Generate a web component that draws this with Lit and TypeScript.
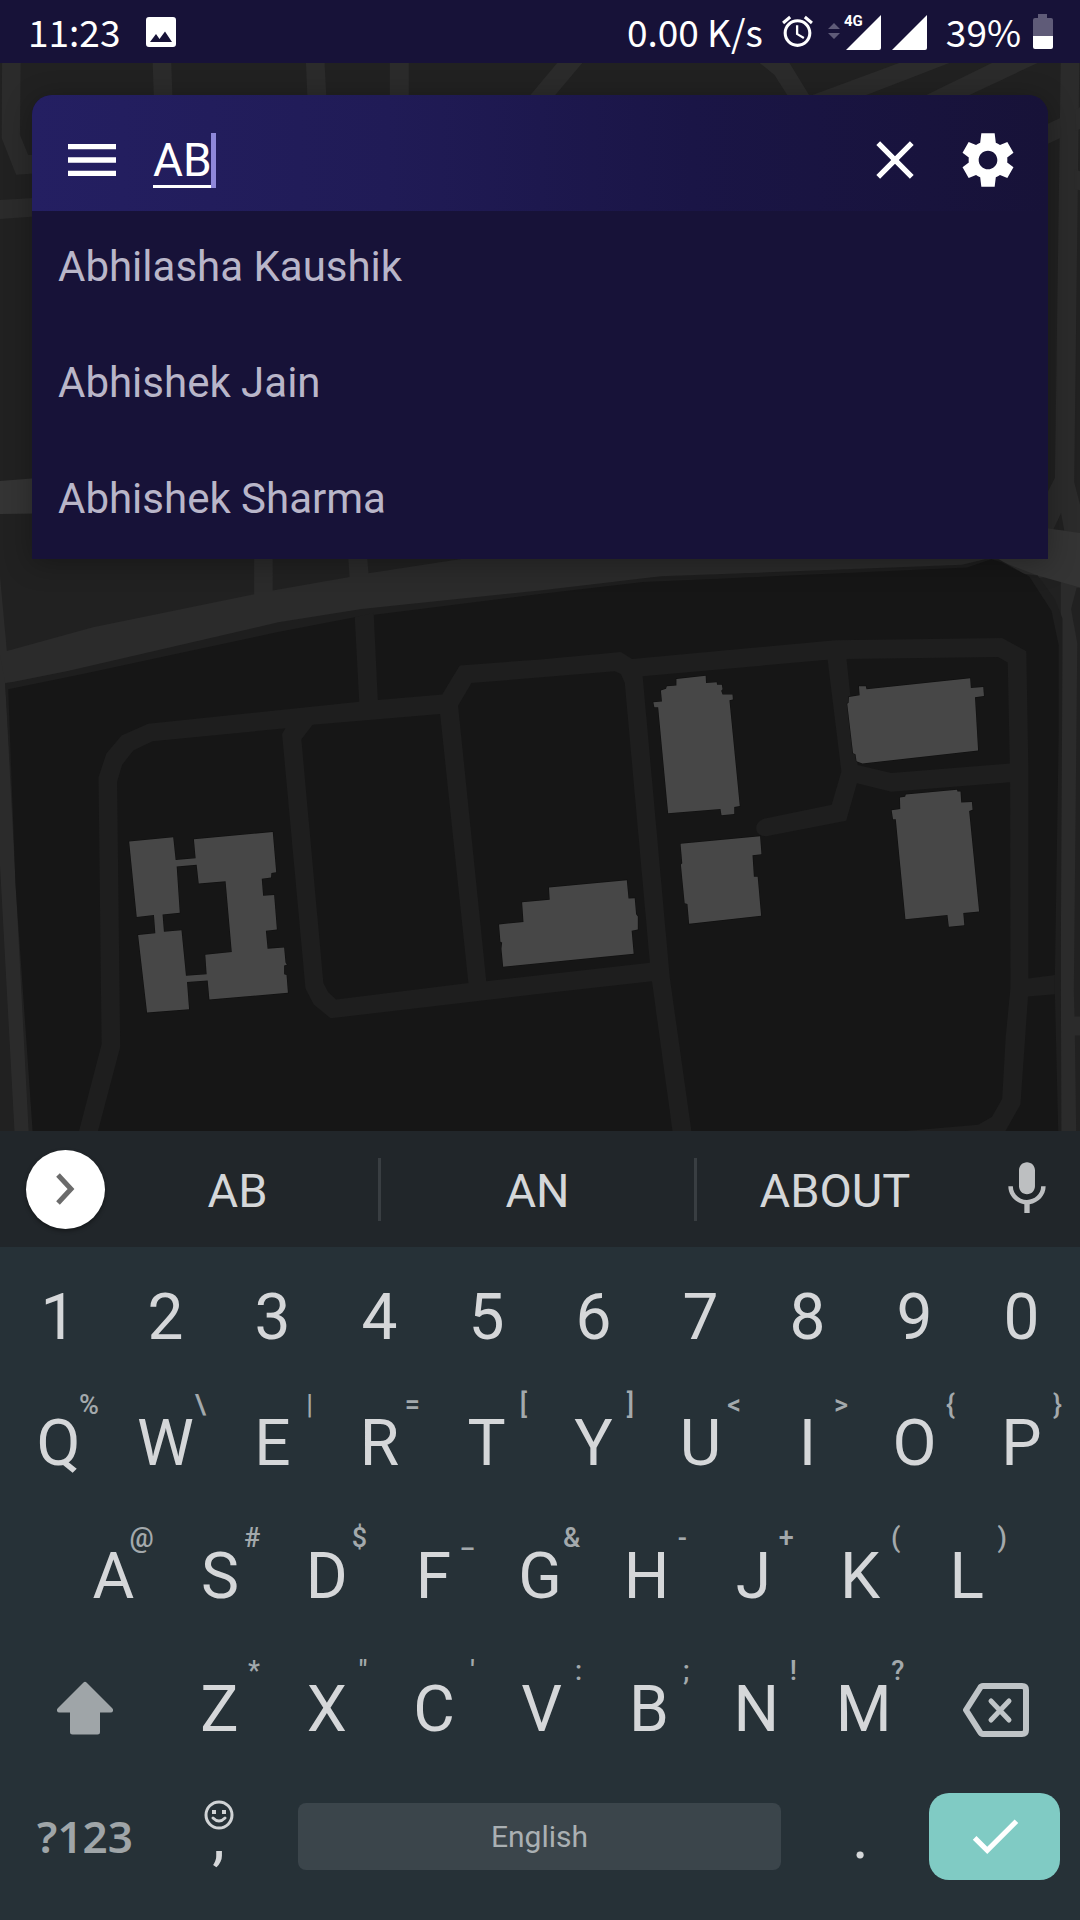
import { LitElement, html, css, svg, nothing } from "lit";
import { customElement, property, state } from "lit/decorators.js";

type Key = [label: string, hint?: string];

const DIGITS: Key[] = [..."1234567890"].map((d) => [d] as Key);
const TOP: Key[] = [
  ["Q", "%"], ["W", "\\"], ["E", "|"], ["R", "="], ["T", "["],
  ["Y", "]"], ["U", "<"], ["I", ">"], ["O", "{"], ["P", "}"],
];
const HOME: Key[] = [
  ["A", "@"], ["S", "#"], ["D", "$"], ["F", "_"], ["G", "&"],
  ["H", "-"], ["J", "+"], ["K", "("], ["L", ")"],
];
const LOWER: Key[] = [
  ["Z", "*"], ["X", '"'], ["C", "'"], ["V", ":"], ["B", ";"], ["N", "!"], ["M", "?"],
];

/* Status bar: clock, traffic, signal and battery. */
@customElement("status-bar")
export class StatusBar extends LitElement {
  static styles = css`
    :host {
      display: flex;
      align-items: center;
      height: 63px;
      padding: 0 27px 0 28px;
      background: #171238;
      color: #fff;
      font: 400 37px/63px "Noto Sans CJK SC", "Noto Sans", sans-serif;
      white-space: nowrap;
    }
    svg { display: block; flex: none; }
    .picture { margin-left: 26px; }
    .traffic { margin-left: auto; }
    .alarm { margin-left: 16px; }
    .signal { margin-left: 12px; }
    .level { margin-left: 18px; }
    .battery { margin-left: 12px; }
    .net { font: 700 15px Roboto, sans-serif; }
  `;

  render() {
    return html`
      <span>11:23</span>
      <svg class="picture" width="30" height="30" viewBox="0 0 30 30" aria-hidden="true">
        <path fill="#fff" fill-rule="evenodd" d="M3 0h24a3 3 0 0 1 3 3v24a3 3 0 0 1-3 3H3a3 3 0 0 1-3-3V3a3 3 0 0 1 3-3zM4 25h22l-7-10.500-5.500 7.500L10 17z" />
      </svg>
      <span class="traffic">0.00 K/s</span>
      <svg class="alarm" width="37" height="37" viewBox="0 0 24 24" fill="#fff" aria-hidden="true">
        <path d="M22 5.720l-4.600-3.860-1.290 1.530 4.600 3.860L22 5.720zM7.880 3.390L6.600 1.860 2 5.710l1.290 1.530 4.590-3.850zM12.500 8H11v6l4.750 2.850.75-1.230-4-2.370V8zM12 4c-4.970 0-9 4.030-9 9s4.020 9 9 9c4.970 0 9-4.030 9-9s-4.030-9-9-9zm0 16c-3.870 0-7-3.130-7-7s3.130-7 7-7 7 3.130 7 7-3.130 7-7 7z" />
      </svg>
      <svg class="signal" width="100" height="48" viewBox="0 -6 100 48" fill="#fff" aria-hidden="true">
        <path fill="#5f5b78" d="M0 15l6-6 6 6zM0 19h12l-6 6z" />
        <path d="M53 1v33a2 2 0 0 1-2 2H18zM99 1v33a2 2 0 0 1-2 2H64z" />
        <text class="net" x="16" y="12">4G</text>
      </svg>
      <span class="level">39%</span>
      <svg class="battery" width="20" height="35" viewBox="0 0 20 35" aria-hidden="true">
        <path fill="#5f5b78" d="M5 0h9v4h4a2 2 0 0 1 2 2v17H0V6a2 2 0 0 1 2-2h3z" />
        <path fill="#fff" d="M0 22h20v11a2 2 0 0 1-2 2H2a2 2 0 0 1-2-2z" />
      </svg>
    `;
  }
}

/* Dark street map; scales to cover whatever area it is given. */
@customElement("street-map")
export class StreetMap extends LitElement {
  static styles = css`
    :host { display: block; overflow: hidden; background: #212121; }
    svg { display: block; width: 100%; height: 100%; }
    .land { fill: #212121; }
    .road { fill: #2b2b2b; }
    .wide { fill: #343434; }
    .campus { fill: #161616; }
    .lane { fill: #1e1e1e; }
    .building { fill: #474747; stroke: #101010; stroke-width: 3; paint-order: stroke; fill-rule: evenodd; }
  `;

  private streets = svg`
    <g class="road" transform="scale(.3444 .3333)">
      <path d="M6 180H60L58 405 82 465H110V520L47 524 5 415z" />
      <path d="M0 600L110 593V649L0 657z" />
      <path d="M443 180H497L501 300H447zM888 180H942L948 300H893zM1132 180H1187V300H1132z" />
      <path d="M1625 180H1698L1600 300H1528zM2195 180H2287L2358 300H2295L2249 225z" />
      <path d="M2320 300L2634 180H2779L2478 300zM2660 300L2898 180H3031L2784 300z" />
      <path d="M3080 180H3134L3119 1446 3140 1530V1610H3030V1500L3063 1434z" />
      <path d="M3030 377L3080 353V413L3030 437zM3124 327L3140 320V385L3124 392zM3120 508L3140 515V572L3120 566z" />
      <path class="wide" d="M0 1443L110 1434V1541L0 1542z" />
      <path class="land" d="M3081 1539L3090 1592H3057z" />
    </g>`;

  private campus = svg`
    <g transform="translate(0 540) scale(.3444 .38265)">
      <path class="road" d="M0 95L20 290 270 228 738 142V0H792V132L1015 97 1008 0H1062L1070 87 1700 0H3030L3136 100V125L3126 125 3110 180 3128 270 3118 1180 3120 1245H3136V1295H3121L3125 1560H3080V93L0 375z" />
      <path class="wide" d="M2860 40L3030 -32 3140 -18V125L3013 93z" />
      <path class="road" d="M0 300L15 375 84 1560H43L0 850z" />
      <path class="lane" d="M15 375L200 342 808 215 1050 180 1568 132 1918 95 2793 65 2860 50H2900L2973 88 3013 93 3063 155 3085 205V300L3080 1100 3082 1560H96z" />
      <path class="campus" d="M24 390L240 350 800 242 1030 202 1568 141 1868 110 2808 72 2878 50 2908 58 2988 95 3053 185 3074 275V500L3063 1136V1187L3073 1560H96L45 900z" />
      <path class="lane" d="M225 1560L295 1318 286 620 309 558 353 511 430 480 1043 423 1030 202 1085 190 1097 418 1284 404 1335 328 1568 312 1803 293 1835 311 2425 262 2910 256 2980 291 2986 600V1146L3063 1137V1187L2985 1193 2963 1475 2910 1560H2430L2840 1528 2880 1508 2910 1460 2920 1300 2934 1170 2933 633 2588 658 2488 636 2457 734 2225 774C2186 774 2186 734 2225 727L2415 692 2443 605 2403 313 1866 356 1945 1145 2010 1560H1955L1893 1153 1568 1186 960 1250 911 1214 887 1172 819 507 829 492 443 526 387 550 355 587 340 632 349 1325 280 1560z" />
      <path class="campus" d="M875 521L908 483 1278 455 1360 1158 976 1201 953 1182 939 1158zM1330 433L1369 374 1785 343 1803 350 1814 373 1887 1105 1412 1153zM2458 311L2898 306 2926 320 2932 584 2588 609 2490 588z" />
      <path class="building" d="M375 788L503 777 510 836 568 832 563 782 792 763 802 868 788 870 787 882 760 885 764 930 796 928 804 1018 772 1021 777 1068 825 1065 829 1104 833 1110 825 1112V1135L832 1137 836 1183 608 1201 603 1151 543 1155 549 1226 427 1235 401 1032 451 1028 447 980 397 985zM513 853L571 849 577 898 655 892 673 1077 596 1084 600 1135 540 1139 527 1020 476 1024 472 979 522 974z" />
      <path class="building" d="M1449 1005L1520 998 1516 947 1596 940 1594 908 1820 889 1825 937 1843 936 1847 978 1852 984V1018L1834 1021 1840 1081 1461 1115 1456 1068 1458 1052 1453 1050z" />
      <path class="building" d="M1964 363L2049 355 2050 374 2081 372 2082 378H2096L2098 390 2094 394 2098 404H2127L2128 417 2118 419 2148 695 2132 698V716L2095 719 2092 703 1940 714 1911 437H1900L1897 424 1922 422 1919 393 1934 389 1936 382 1964 380z" />
      <path class="building" d="M1976 794L2207 774 2211 821 2185 824 2189 880H2200L2210 982 2001 1003 1996 951 1988 949 1977 848 1981 845z" />
      <path class="building" d="M2465 410L2496 406 2494 382H2514L2516 390 2817 361 2819 387 2855 384 2857 408 2831 411 2840 550 2504 584 2487 578 2484 560 2477 557 2460 428 2464 425z" />
      <path class="building" d="M2613 673L2628 671 2630 665 2779 653 2780 657H2789L2791 686 2822 685 2824 705 2814 708 2843 971 2797 975 2800 1007 2755 1011 2751 980 2629 991 2601 730H2593L2589 706 2614 703z" />
    </g>`;

  render() {
    return html`
      <svg viewBox="0 63 1080 1068" preserveAspectRatio="xMidYMin slice" role="img" aria-label="Map">
        ${this.streets}${this.campus}
      </svg>
    `;
  }
}

/* Search field with its list of matching contacts. */
@customElement("search-card")
export class SearchCard extends LitElement {
  @property() query = "AB";
  @property({ attribute: false }) matches = ["Abhilasha Kaushik", "Abhishek Jain", "Abhishek Sharma"];

  static styles = css`
    :host {
      display: block;
      border-radius: 20px 20px 0 0;
      overflow: hidden;
      background: #171238;
      box-shadow: 0 4px 28px rgba(0, 0, 0, 0.3);
    }
    button {
      padding: 0;
      border: 0;
      background: none;
      color: inherit;
      font: inherit;
      text-align: left;
    }
    svg { display: block; width: 64px; height: 64px; fill: #fff; }
    .bar {
      display: flex;
      align-items: center;
      height: 116px;
      box-sizing: border-box;
      padding: 14px 28px 0;
      background: linear-gradient(90deg, #241f62 0%, #201b56 35%, #1a1546 65%, #171238 100%);
    }
    .field {
      display: flex;
      flex: 1;
      align-items: stretch;
      height: 55px;
      margin-left: 29px;
    }
    .input {
      width: 58px;
      field-sizing: content;
      box-sizing: border-box;
      padding: 2px 0 0;
      border: 0;
      border-bottom: 3px solid #fff;
      border-radius: 0;
      outline: 0;
      background: none;
      color: #fff;
      font: 400 46px/50px Roboto, sans-serif;
    }
    .caret { width: 5px; background: #8e87d9; }
    .settings { margin-left: 29px; }
    .list { margin: 0; padding: 0; list-style: none; }
    .match {
      display: block;
      width: 100%;
      height: 116px;
      padding: 0 26px 4px;
      color: #b9b6c9;
      font: 400 42px/52px Roboto, sans-serif;
    }
  `;

  render() {
    return html`
      <div class="bar">
        <button aria-label="Menu"><svg viewBox="0 0 24 24"><path d="M3 18h18v-2H3v2zm0-5h18v-2H3v2zm0-7v2h18V6H3z" /></svg></button>
        <label class="field">
          <input class="input" type="text" aria-label="Search" .value=${this.query} />
          <span class="caret"></span>
        </label>
        <button aria-label="Clear"><svg viewBox="0 0 24 24"><path d="M19 6.410L17.590 5 12 10.590 6.410 5 5 6.410 10.590 12 5 17.590 6.410 19 12 13.410 17.590 19 19 17.590 13.410 12z" /></svg></button>
        <button class="settings" aria-label="Settings">
          <svg viewBox="0 0 24 24"><path d="M19.200 12.900c.05-.3.05-.6.050-.9s0-.6-.05-.9l2.350-1.840-2.300-3.980-2.760 1.120c-.5-.38-1-.68-1.560-.9L14.500 2h-5l-.43 3.500c-.56.220-1.060.52-1.560.9L4.750 5.280l-2.300 3.980L4.800 11.100c-.05.3-.05.6-.05.9s0 .6.050.9l-2.350 1.840 2.300 3.980 2.760-1.120c.5.38 1 .68 1.560.9L9.500 22h5l.43-3.500c.56-.22 1.060-.52 1.560-.9l2.760 1.120 2.300-3.980zM12 15.500c-1.930 0-3.500-1.570-3.500-3.500s1.570-3.500 3.500-3.500 3.500 1.570 3.500 3.500-1.570 3.500-3.500 3.500z" /></svg>
        </button>
      </div>
      <ul class="list">
        ${this.matches.map((name) => html`<li><button class="match">${name}</button></li>`)}
      </ul>
    `;
  }
}

/* On-screen keyboard with word suggestions. */
@customElement("soft-keyboard")
export class SoftKeyboard extends LitElement {
  @state() private words = ["AB", "AN", "ABOUT"];

  static styles = css`
    :host {
      display: block;
      background: #263137;
      color: #d5d7d9;
      font-family: Roboto, sans-serif;
    }
    button {
      padding: 0;
      border: 0;
      background: none;
      color: inherit;
      font: inherit;
    }
    svg { display: block; }
    .strip {
      display: grid;
      grid-template-columns: 105fr 273fr 3px 313fr 3px 276fr 107fr;
      align-items: center;
      height: 116px;
      background: #21262a;
      font-size: 47px;
    }
    .more {
      display: grid;
      place-items: center;
      justify-self: end;
      width: 79px;
      height: 79px;
      border-radius: 50%;
      background: #fff;
      box-shadow: 0 2px 4px rgba(0, 0, 0, 0.4);
    }
    .word { height: 100%; padding-top: 2px; }
    .word.first { padding-right: 8px; }
    .rule { height: 63px; background: #393e42; }
    .mic { justify-self: center; fill: #bdbfc1; }
    .keys { padding: 10px 5px 24px; font-size: 64px; }
    .row { display: grid; height: 133px; }
    .row.ten { grid-template-columns: repeat(10, 1fr); }
    .row.digits { height: 120px; }
    .row.nine { grid-template-columns: repeat(9, 1fr); padding: 0 55px; }
    .row.seven { grid-template-columns: 160fr repeat(7, 107fr) 157fr; }
    .row.bottom { grid-template-columns: 160fr 107fr 535fr 107fr 161fr; align-items: center; height: 120px; }
    .key { display: grid; align-items: center; justify-items: center; height: 100%; }
    .label, .hint, .smile { grid-area: 1 / 1; }
    .hint {
      place-self: start end;
      padding: 14px 13px 0 0;
      color: #a3a9ac;
      font-size: 27px;
      font-weight: 500;
      line-height: 28px;
    }
    .symbols { color: #9fa5a8; font: 600 44px "Noto Sans", sans-serif; }
    .smile { align-self: start; margin-top: 24px; }
    .space {
      height: 67px;
      margin: 0 26px;
      border-radius: 8px;
      background: #3b454b;
      color: #aab0b3;
      font-size: 30px;
    }
    .enter {
      display: grid;
      place-items: center;
      height: 87px;
      margin: 0 15px;
      border-radius: 20px;
      background: #80cbc4;
      fill: #fff;
    }
  `;

  private key([label, hint]: Key) {
    return html`<button class="key">
      <span class="label">${label}</span>${hint ? html`<span class="hint">${hint}</span>` : nothing}
    </button>`;
  }

  render() {
    const [a, b, c] = this.words;
    return html`
      <div class="strip">
        <button class="more" aria-label="More">
          <svg width="19" height="32" viewBox="0 0 19 32" fill="none" stroke="#6b6b6b" stroke-width="5"><path d="M2 2l13 14L2 30" /></svg>
        </button>
        <button class="word first">${a}</button>
        <span class="rule"></span>
        <button class="word">${b}</button>
        <span class="rule"></span>
        <button class="word">${c}</button>
        <button class="mic" aria-label="Voice input">
          <svg width="64" height="64" viewBox="0 0 24 24"><path d="M12 14c1.660 0 2.990-1.340 2.990-3L15 5c0-1.660-1.340-3-3-3S9 3.340 9 5v6c0 1.660 1.340 3 3 3zm5.300-3c0 3-2.540 5.100-5.300 5.100S6.700 14 6.700 11H5c0 3.410 2.720 6.230 6 6.720V21h2v-3.280c3.280-.48 6-3.300 6-6.720h-1.700z" /></svg>
        </button>
      </div>
      <div class="keys">
        <div class="row ten digits">${DIGITS.map((k) => this.key(k))}</div>
        <div class="row ten">${TOP.map((k) => this.key(k))}</div>
        <div class="row nine">${HOME.map((k) => this.key(k))}</div>
        <div class="row seven">
          <button class="key" aria-label="Shift">
            <svg width="56" height="58" viewBox="0 0 56 58" fill="#9fa5a8"><path d="M26.500 1.500q1.500-1.500 3 0L55 27q1.500 1.500 1 3-.5 1.500-2.500 1.500H43V51q0 2.500-2.500 2.500H15.500Q13 53.500 13 51V31.500H2.500Q.5 31.500 0 30q-.5-1.500 1-3z" /></svg>
          </button>
          ${LOWER.map((k) => this.key(k))}
          <button class="key" aria-label="Backspace">
            <svg width="68" height="54" viewBox="0 0 68 54" fill="none" stroke="#bfc4c7" stroke-width="6"><path stroke-linejoin="round" d="M21 3h39q4 0 4 4v40q0 4-4 4H21q-2 0-3-2L4 27 18 5q1-2 3-2z" /><path stroke-width="5" stroke-linecap="round" d="M29 18l18 19M47 18L29 37" /></svg>
          </button>
        </div>
        <div class="row bottom">
          <button class="key symbols">?123</button>
          <button class="key">
            <svg class="smile" width="30" height="30" viewBox="0 0 30 30" fill="none" stroke="#d0d3d5" stroke-width="3"><circle cx="15" cy="15" r="13" /><path d="M9 18q6 6 12 0" stroke-linecap="round" /><path d="M10 10v4M20 10v4" stroke-width="4" /></svg>
            <span class="label">,</span>
          </button>
          <button class="space">English</button>
          <button class="key">.</button>
          <button class="enter" aria-label="Done">
            <svg width="62" height="62" viewBox="0 0 24 24"><path d="M9 16.170L4.830 12l-1.420 1.410L9 19 21 7l-1.410-1.410z" /></svg>
          </button>
        </div>
      </div>
    `;
  }
}

@customElement("app-root")
export class AppRoot extends LitElement {
  static styles = css`
    :host {
      display: flex;
      flex-direction: column;
      min-height: 100vh;
      background: #212121;
    }
    .stage { position: relative; flex: 1; }
    .map { position: absolute; inset: 0; }
    .search { position: relative; margin: 32px; }
  `;

  render() {
    return html`
      <status-bar></status-bar>
      <main class="stage">
        <street-map class="map"></street-map>
        <search-card class="search"></search-card>
      </main>
      <soft-keyboard></soft-keyboard>
    `;
  }
}
